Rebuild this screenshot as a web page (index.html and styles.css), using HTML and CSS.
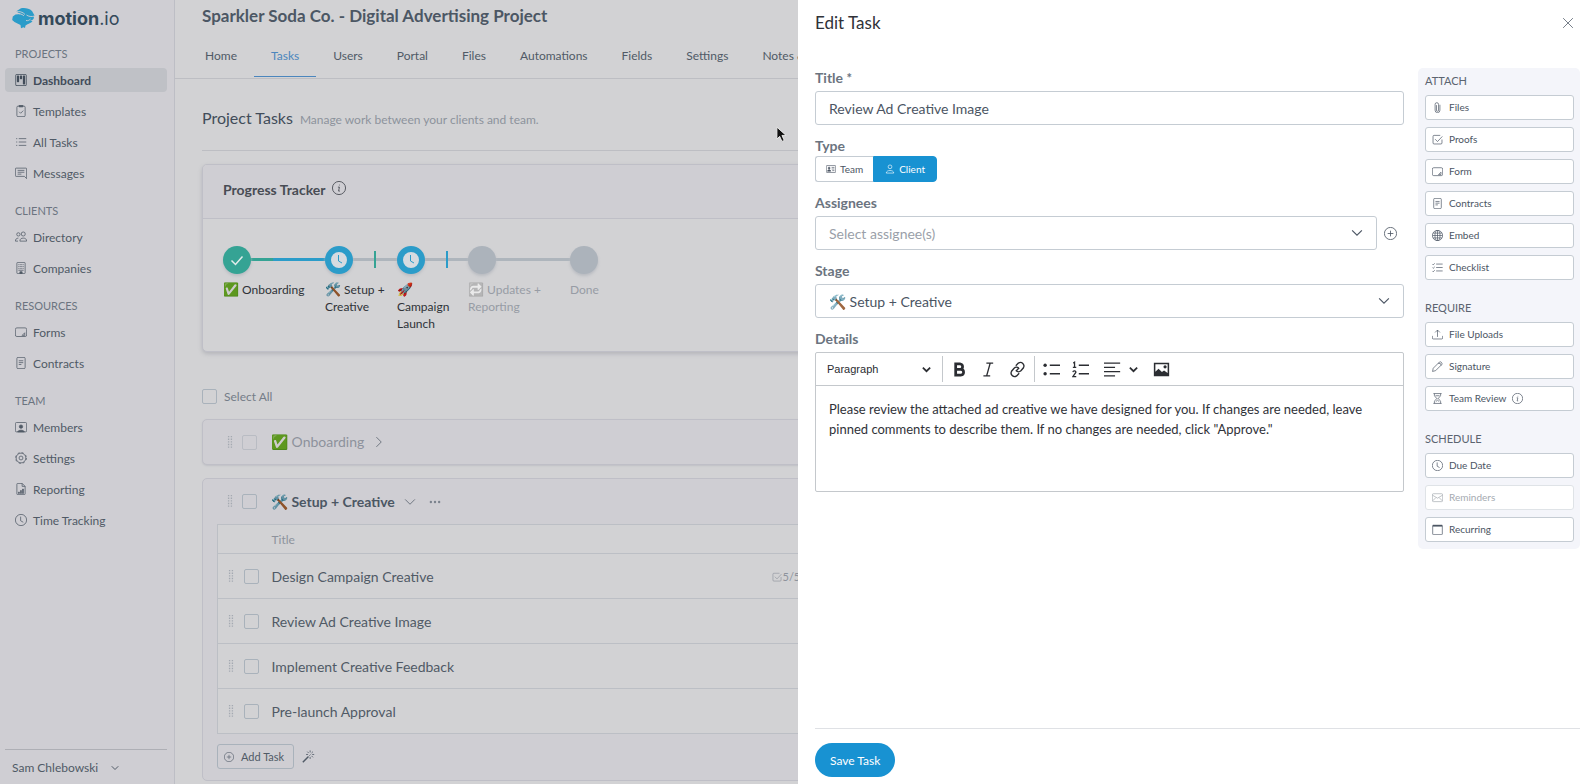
FILE: index.html
```html
<!DOCTYPE html>
<html lang="en">
<head>
    <meta charset="UTF-8">
    <title>Sparkler Soda Co. - Digital Advertising Project</title>
    <link rel="stylesheet" href="styles.css">
</head>
<body>
    <svg class="sprite" aria-hidden="true">
        <symbol id="kanban" viewBox="0 0 16 16"><path fill="currentColor" stroke="none" d="M13.5 1a1 1 0 0 1 1 1v12a1 1 0 0 1-1 1h-11a1 1 0 0 1-1-1V2a1 1 0 0 1 1-1zm-11-1a2 2 0 0 0-2 2v12a2 2 0 0 0 2 2h11a2 2 0 0 0 2-2V2a2 2 0 0 0-2-2zM6.5 3a1 1 0 0 1 1-1h1a1 1 0 0 1 1 1v3a1 1 0 0 1-1 1h-1a1 1 0 0 1-1-1zm-4 0a1 1 0 0 1 1-1h1a1 1 0 0 1 1 1v7a1 1 0 0 1-1 1h-1a1 1 0 0 1-1-1zm8 0a1 1 0 0 1 1-1h1a1 1 0 0 1 1 1v10a1 1 0 0 1-1 1h-1a1 1 0 0 1-1-1z"/></symbol>
        <symbol id="clipboard" viewBox="0 0 16 16"><rect x="2.5" y="1.5" width="11" height="14" rx="1.5"/><path fill="currentColor" d="M5.5.5h5v2h-5z"/><path d="M5.5 9l2 2 3.500-3.500"/></symbol>
        <symbol id="list" viewBox="0 0 16 16"><path d="M5 3.500h10M5 8h10M5 12.500h10M1.500 3.500h1.500M1.500 8h1.500M1.500 12.500h1.500"/></symbol>
        <symbol id="message" viewBox="0 0 16 16"><path d="M1.500 1.500h13a1 1 0 0 1 1 1v13L12.500 12.500h-11a1 1 0 0 1-1-1v-9a1 1 0 0 1 1-1zM3.500 4.500h9M3.500 7h9M3.500 9.500h5"/></symbol>
        <symbol id="people" viewBox="0 0 16 16"><circle cx="4.500" cy="4.500" r="2.200"/><circle cx="11" cy="4" r="2.700"/><path d="M6.500 13.500c0-3 2-4 4.500-4s4.500 1 4.500 4zM4 13.500H.5c0-2.500 1.500-4 4-4"/></symbol>
        <symbol id="building" viewBox="0 0 16 16"><rect x="2.500" y=".5" width="11" height="15" rx="1"/><path d="M4.500 3.500h1.500m1 0h2m1 0h1.500M4.500 6h1.500m1 0h2m1 0h1.500M4.500 8.500h1.500m1 0h2m1 0h1.500M4.500 11h7"/><path fill="currentColor" d="M6.500 13h3v2.500h-3z"/></symbol>
        <symbol id="form" viewBox="0 0 16 16"><rect x=".5" y="2.500" width="15" height="11.500" rx="2"/><path d="M9.500 12.500l3.500-3.500v3.500z"/></symbol>
        <symbol id="contract" viewBox="0 0 16 16"><rect x="2.500" y=".5" width="11" height="15" rx="1.500"/><path d="M5 5h6M5 7.500h6M5 10h3.500"/></symbol>
        <symbol id="member" viewBox="0 0 16 16"><path d="M2 14.500a1.500 1.500 0 0 1-1.500-1.500V3.500A1.500 1.500 0 0 1 2 2h12a1.500 1.500 0 0 1 1.500 1.500V13a1.500 1.500 0 0 1-1.500 1.500z"/><circle fill="currentColor" cx="8" cy="7.500" r="2.200"/><path fill="currentColor" d="M3.500 14.500c1-3 8-3 9 0z"/></symbol>
        <symbol id="gear" viewBox="0 0 16 16"><circle cx="8" cy="8" r="6.500"/><circle cx="8" cy="8" r="7.200" stroke-dasharray="2.800 2.855"/><circle cx="8" cy="8" r="2.600"/></symbol>
        <symbol id="report" viewBox="0 0 16 16"><path d="M9.500.5h-6a1 1 0 0 0-1 1v13a1 1 0 0 0 1 1h9a1 1 0 0 0 1-1v-10zM9.500.5v4h4"/><path fill="currentColor" d="M4.800 12h.9v2h-.9zM7.500 10h.9v4h-.9zM10.200 8h.9v6h-.9z"/></symbol>
        <symbol id="clock" viewBox="0 0 16 16"><circle cx="8" cy="8" r="7.500"/><path d="M7.500 3.500v5.500l3.500 2"/></symbol>
        <symbol id="info" viewBox="0 0 16 16"><circle cx="8" cy="8" r="7.500"/><path d="M6.800 7h1.700l-1 4.500h1.500M8.500 4.200v.8"/></symbol>
        <symbol id="down" viewBox="0 0 16 16"><path d="M1.500 4.500L8 11l6.500-6.500"/></symbol>
        <symbol id="right" viewBox="0 0 16 16"><path d="M4.500 1.500L11 8l-6.500 6.500"/></symbol>
        <symbol id="grip" viewBox="0 0 6 16"><path stroke-width="1.400" stroke-dasharray="1.400 1.400" d="M1.500 1v14M4.500 1v14"/></symbol>
        <symbol id="more" viewBox="0 0 16 16"><g fill="currentColor" stroke="none"><circle cx="2.500" cy="8" r="1.600"/><circle cx="8" cy="8" r="1.600"/><circle cx="13.500" cy="8" r="1.600"/></g></symbol>
        <symbol id="plus" viewBox="0 0 16 16"><circle cx="8" cy="8" r="7.500"/><path d="M8 4.500v7M4.500 8h7"/></symbol>
        <symbol id="wand" viewBox="0 0 16 16"><path stroke-width="1.800" d="M1 15l7-7"/><path d="M10 .5v2.500M10 8.500V11M5 5.500h2.500M12.500 5.500H15M6.500 2l1.800 1.800M13.500 2l-1.800 1.800M13.500 9l-1.800-1.800M9 7l1.500-1.500"/></symbol>
        <symbol id="proof" viewBox="0 0 16 16"><path d="M14.500 8v5a1.500 1.500 0 0 1-1.500 1.500H3A1.500 1.500 0 0 1 1.500 13V3.500A1.500 1.500 0 0 1 3 2h9M4.500 7.500l3.500 3.500 7-7.500"/></symbol>
        <symbol id="close" viewBox="0 0 16 16"><path d="M1.500 1.500l13 13M14.500 1.500l-13 13"/></symbol>
        <symbol id="card" viewBox="0 0 16 16"><rect x=".5" y="2.500" width="15" height="11" rx="1"/><circle fill="currentColor" cx="5" cy="6.500" r="1.500"/><path fill="currentColor" d="M2.500 11.500c0-3 5-3 5 0z"/><path d="M9 5.500h4.500M9 8h4.500M10 10.500h3.500"/></symbol>
        <symbol id="person" viewBox="0 0 16 16"><circle cx="8" cy="4.500" r="3"/><path d="M2 14.500c0-5.500 12-5.500 12 0z"/></symbol>
        <symbol id="clip" viewBox="0 0 16 16"><path d="M4.500 3.500a2.500 2.500 0 0 1 5 0v8.500a1.500 1.500 0 0 1-3 0V4.500M4.500 3.500v8.500a3.500 3.500 0 0 0 7 0V4"/></symbol>
        <symbol id="globe" viewBox="0 0 16 16"><circle cx="8" cy="8" r="7.500"/><ellipse cx="8" cy="8" rx="3.700" ry="7.500"/><path d="M8 .5v15M.5 8h15M1.500 4.500h13M1.500 11.500h13"/></symbol>
        <symbol id="checklist" viewBox="0 0 16 16"><path d="M6 3h9.500M6 8h9.500M6 13h9.500M.5 3l1.200 1.200L4 2M.5 8l1.200 1.200L4 7M.5 13l1.200 1.200L4 12"/></symbol>
        <symbol id="upload" viewBox="0 0 16 16"><path d="M.5 10v3a1.500 1.500 0 0 0 1.500 1.500h12a1.500 1.500 0 0 0 1.500-1.500v-3M8 11.500V1.500M4.500 5L8 1.500 11.500 5"/></symbol>
        <symbol id="pen" viewBox="0 0 16 16"><path d="M.8 15.200l1-4.700 9-9c1.500-1.500 5 1.500 3.500 3.500l-9 9zM9 3.500h3l1.500 3"/></symbol>
        <symbol id="hourglass" viewBox="0 0 16 16"><path d="M2 .8h12M2 15.200h12M3.500 1v2.500c0 2.500 3.500 3 3.500 4.500s-3.500 2-3.500 4.500V15M12.500 1v2.500c0 2.500-3.500 3-3.500 4.500s3.500 2 3.500 4.500V15M5 4h6M5.500 12.500L8 10.500l2.500 2"/></symbol>
        <symbol id="mail" viewBox="0 0 16 16"><rect x=".5" y="2.500" width="15" height="11.500" rx="1.500"/><path d="M.5 4.500L8 9l7.500-4.500M.8 13l5-5M15.200 13l-5-5"/></symbol>
        <symbol id="calendar" viewBox="0 0 16 16"><rect x="1" y="2" width="14" height="13.500" rx="1"/><path stroke-width="2.500" d="M1 2.500h14"/></symbol>
        <symbol id="image" viewBox="0 0 20 20"><path fill="currentColor" stroke="none" fill-rule="evenodd" d="M1 2h18v16H1zM2.800 3.800v8.700L6.500 9l4 4 2.500-1.800 4.200 3V3.800zM14.200 5a1.800 1.800 0 1 1 0 3.800 1.800 1.800 0 0 1 0-3.800z"/></symbol>
    </svg>

    <div class="app">
        <aside class="sidebar">
            <a class="logo" href="#">
                <svg viewBox="0 0 24 21" aria-hidden="true">
                    <path fill="#2b9cc9" d="M4 3.500L9 .3c4-.6 8 0 11 2.700l2.500 4.500-1 1.200.5 1c-.5 2-2.500 2.800-4 3.300h2.500c-1 1.800-3.500 2.500-5 3.300l-2 1.200-.5 2.500-1.500-.7-2.500 1-.5-3.300-6-3L.2 12l.6-3.500L3.500 6.500 9 6z"/>
                    <path fill="none" stroke="#cfced3" stroke-width=".9" d="M4 3.800c3-.8 7 .2 9 2.700M22.500 8c-3 1-6 .5-8-1M14 12.500c2 .5 3-.2 4.500-1.500M7 5.800c2.500.2 4 1 5 2.200"/>
                </svg>
                <span><b>motion</b>.io</span>
            </a>
            <nav class="menu">
                <h2>PROJECTS</h2>
                <a class="active" href="#"><svg class="icon"><use href="#kanban"/></svg>Dashboard</a>
                <a href="#"><svg class="icon"><use href="#clipboard"/></svg>Templates</a>
                <a href="#"><svg class="icon"><use href="#list"/></svg>All Tasks</a>
                <a href="#"><svg class="icon"><use href="#message"/></svg>Messages</a>
                <h2>CLIENTS</h2>
                <a href="#"><svg class="icon"><use href="#people"/></svg>Directory</a>
                <a href="#"><svg class="icon"><use href="#building"/></svg>Companies</a>
                <h2>RESOURCES</h2>
                <a href="#"><svg class="icon"><use href="#form"/></svg>Forms</a>
                <a href="#"><svg class="icon"><use href="#contract"/></svg>Contracts</a>
                <h2>TEAM</h2>
                <a href="#"><svg class="icon"><use href="#member"/></svg>Members</a>
                <a href="#"><svg class="icon"><use href="#gear"/></svg>Settings</a>
                <a href="#"><svg class="icon"><use href="#report"/></svg>Reporting</a>
                <a href="#"><svg class="icon"><use href="#clock"/></svg>Time Tracking</a>
            </nav>
            <button class="account">Sam Chlebowski <svg><use href="#down"/></svg></button>
        </aside>

        <main>
            <h1>Sparkler Soda Co. - Digital Advertising Project</h1>
            <nav class="tabs">
                <a href="#">Home</a>
                <a class="active" href="#">Tasks</a>
                <a href="#">Users</a>
                <a href="#">Portal</a>
                <a href="#">Files</a>
                <a href="#">Automations</a>
                <a href="#">Fields</a>
                <a href="#">Settings</a>
                <a href="#">Notes &amp; Activity</a>
            </nav>
            <div class="content">
                <header class="pageHead">
                    <h2>Project Tasks</h2>
                    <p>Manage work between your clients and team.</p>
                </header>

                <section class="card tracker">
                    <h3>Progress Tracker <svg class="icon"><use href="#info"/></svg></h3>
                    <ol class="steps">
                        <li class="done">
                            <i class="dot"><svg viewBox="0 0 16 16"><path d="M2.500 8.500l4 4 7-8"/></svg></i>
                            <span><span class="emoji">✅</span> Onboarding</span>
                        </li>
                        <li class="current tickGreen">
                            <i class="dot"><svg viewBox="0 0 16 16"><path d="M7.500 3v6l3.500 2"/></svg></i>
                            <span><span class="emoji">🛠️</span> Setup + Creative</span>
                        </li>
                        <li class="current tickBlue">
                            <i class="dot"><svg viewBox="0 0 16 16"><path d="M7.500 3v6l3.500 2"/></svg></i>
                            <span><span class="emoji">🚀</span> Campaign Launch</span>
                        </li>
                        <li>
                            <i class="dot"></i>
                            <span><span class="emoji faded">🔁</span> Updates + Reporting</span>
                        </li>
                        <li>
                            <i class="dot"></i>
                            <span>Done</span>
                        </li>
                    </ol>
                </section>

                <label class="selectAll"><input type="checkbox"> Select All</label>

                <section class="card stage closed">
                    <header>
                        <svg class="grip"><use href="#grip"/></svg>
                        <input type="checkbox" aria-label="Select Onboarding">
                        <h3><span class="emoji">✅</span> Onboarding</h3>
                        <svg class="icon"><use href="#right"/></svg>
                    </header>
                </section>

                <section class="card stage">
                    <header>
                        <svg class="grip"><use href="#grip"/></svg>
                        <input type="checkbox" aria-label="Select Setup + Creative">
                        <h3><span class="emoji">🛠️</span> Setup + Creative</h3>
                        <svg class="icon"><use href="#down"/></svg>
                        <svg class="icon"><use href="#more"/></svg>
                    </header>
                    <table>
                        <thead>
                            <tr><th></th><th></th><th>Title</th><th></th></tr>
                        </thead>
                        <tbody>
                            <tr>
                                <td><svg class="grip"><use href="#grip"/></svg></td>
                                <td><input type="checkbox" aria-label="Select Design Campaign Creative"></td>
                                <td>Design Campaign Creative</td>
                                <td class="count"><svg><use href="#proof"/></svg>5/5</td>
                            </tr>
                            <tr>
                                <td><svg class="grip"><use href="#grip"/></svg></td>
                                <td><input type="checkbox" aria-label="Select Review Ad Creative Image"></td>
                                <td>Review Ad Creative Image</td>
                                <td></td>
                            </tr>
                            <tr>
                                <td><svg class="grip"><use href="#grip"/></svg></td>
                                <td><input type="checkbox" aria-label="Select Implement Creative Feedback"></td>
                                <td>Implement Creative Feedback</td>
                                <td></td>
                            </tr>
                            <tr>
                                <td><svg class="grip"><use href="#grip"/></svg></td>
                                <td><input type="checkbox" aria-label="Select Pre-launch Approval"></td>
                                <td>Pre-launch Approval</td>
                                <td></td>
                            </tr>
                        </tbody>
                    </table>
                    <footer>
                        <button class="addTask"><svg><use href="#plus"/></svg>Add Task</button>
                        <svg class="icon"><use href="#wand"/></svg>
                    </footer>
                </section>
            </div>
        </main>
    </div>

    <svg class="cursor" viewBox="0 0 12 18" aria-hidden="true"><path fill="#111" stroke="#eee" d="M1 1v13l3-3 2.500 5.500 2.500-1-2.500-5.500H11z"/></svg>

    <div class="drawer" role="dialog" aria-labelledby="drawerTitle">
        <header class="drawerHead">
            <h2 id="drawerTitle">Edit Task</h2>
            <button class="plain" aria-label="Close"><svg class="icon"><use href="#close"/></svg></button>
        </header>
        <div class="drawerBody">
            <form id="taskForm">
                <div class="field">
                    <label for="title">Title <small>*</small></label>
                    <input class="box" id="title" type="text" value="Review Ad Creative Image">
                </div>
                <div class="field type">
                    <span class="label">Type</span>
                    <div class="segmented">
                        <button type="button"><svg><use href="#card"/></svg>Team</button>
                        <button type="button" class="on"><svg><use href="#person"/></svg>Client</button>
                    </div>
                </div>
                <div class="field">
                    <label for="assignees">Assignees</label>
                    <div class="row">
                        <div class="select">
                            <select class="box empty" id="assignees"><option>Select assignee(s)</option></select>
                            <svg class="icon"><use href="#down"/></svg>
                        </div>
                        <button type="button" class="plain" aria-label="Add assignee"><svg class="icon"><use href="#plus"/></svg></button>
                    </div>
                </div>
                <div class="field">
                    <label for="stage">Stage</label>
                    <div class="select">
                        <select class="box" id="stage"><option>🛠️ Setup + Creative</option></select>
                        <svg class="icon"><use href="#down"/></svg>
                    </div>
                </div>
                <div class="field">
                    <label for="details">Details</label>
                    <div class="editor">
                        <div class="toolbar">
                            <div class="select paragraph">
                                <select aria-label="Heading"><option>Paragraph</option></select>
                                <svg class="caret"><use href="#down"/></svg>
                            </div>
                            <hr>
                            <button type="button" aria-label="Bold"><svg viewBox="0 0 20 20"><path stroke-width="3.200" d="M5.500 3.500H11a3.200 3.200 0 0 1 0 6.300H5.500zM5.500 9.800H12a3.400 3.400 0 0 1 0 6.700H5.500z"/></svg></button>
                            <button type="button" aria-label="Italic"><svg viewBox="0 0 20 20"><path d="M7.500 2.500h8M4 17.500h8M12 2.500l-4.200 15"/></svg></button>
                            <button type="button" aria-label="Link"><svg viewBox="0 0 20 20"><path d="M8 5.500l3-3c4-2.500 8 1.500 6 5.500l-3 3.500c-1.500 1.500-4 1.500-5.500 0M12 14.500l-3 3c-4 2.500-8-1.500-6-5.500l3-3.500c1.500-1.500 4-1.500 5.500 0M8 12l4-4"/></svg></button>
                            <hr>
                            <button type="button" aria-label="Bulleted list"><svg viewBox="0 0 20 20"><path d="M8 5h12M8 15h12"/><g fill="currentColor" stroke="none"><circle cx="2.500" cy="5" r="2"/><circle cx="2.500" cy="15" r="2"/></g></svg></button>
                            <button type="button" aria-label="Numbered list"><svg viewBox="0 0 20 20"><path d="M8 5h12M8 15h12"/><path stroke-width="1.500" d="M1.500 2.500l1.500-1v6M1 7.500h4M1 13c.5-2 4-1.500 3.500.5L1 18.500h4"/></svg></button>
                            <button type="button" class="align" aria-label="Text alignment"><svg viewBox="0 0 20 20"><path d="M0 2.500h19M0 7.500h13M0 12.500h19M0 17.500h13"/></svg><svg class="caret"><use href="#down"/></svg></button>
                            <button type="button" aria-label="Insert image"><svg><use href="#image"/></svg></button>
                        </div>
                        <textarea id="details">Please review the attached ad creative we have designed for you. If changes are needed, leave pinned comments to describe them. If no changes are needed, click "Approve."</textarea>
                    </div>
                </div>
            </form>
            <aside class="actions">
                <section>
                    <h3>ATTACH</h3>
                    <button><svg><use href="#clip"/></svg>Files</button>
                    <button><svg><use href="#proof"/></svg>Proofs</button>
                    <button><svg><use href="#form"/></svg>Form</button>
                    <button><svg><use href="#contract"/></svg>Contracts</button>
                    <button><svg><use href="#globe"/></svg>Embed</button>
                    <button><svg><use href="#checklist"/></svg>Checklist</button>
                </section>
                <section>
                    <h3>REQUIRE</h3>
                    <button><svg><use href="#upload"/></svg>File Uploads</button>
                    <button><svg><use href="#pen"/></svg>Signature</button>
                    <button><svg><use href="#hourglass"/></svg>Team Review<svg class="hint"><use href="#info"/></svg></button>
                </section>
                <section>
                    <h3>SCHEDULE</h3>
                    <button><svg><use href="#clock"/></svg>Due Date</button>
                    <button disabled><svg><use href="#mail"/></svg>Reminders</button>
                    <button><svg><use href="#calendar"/></svg>Recurring</button>
                </section>
            </aside>
        </div>
        <footer class="drawerFoot">
            <button class="save" type="submit" form="taskForm">Save Task</button>
        </footer>
    </div>
</body>
</html>
```
FILE: styles.css
```css
*{
    box-sizing: border-box;
}
body{
    margin: 0;
    height: 100vh;
    overflow: hidden;
    font-family: Lato, "Noto Sans", sans-serif;
    font-size: 12px;
    line-height: 17px;
    color: #505a66;
    background: #d2d2d4;
}
h1,h2,h3,p,ol{
    margin: 0;
    padding: 0;
}
a{
    color: inherit;
    text-decoration: none;
}
button,input,select,textarea{
    font: inherit;
    color: inherit;
    margin: 0;
}
button{
    background: none;
    border: none;
    padding: 0;
    cursor: pointer;
}
svg{
    display: block;
    flex: none;
    fill: none;
    stroke: currentColor;
}
.sprite{
    display: none;
}
.icon{
    width: 12px;
    height: 12px;
}
.emoji{
    filter: saturate(1.3) brightness(.82);
}
.emoji.faded{
    filter: grayscale(1);
    opacity: .6;
}
input[type="checkbox"]{
    appearance: none;
    display: block;
    flex: none;
    width: 15px;
    height: 15px;
    border: 1px solid #a9b2bb;
    border-radius: 2px;
}
.app{
    display: flex;
    height: 100%;
}

/* sidebar */
.sidebar{
    display: flex;
    flex-direction: column;
    flex: none;
    width: 175px;
    padding: 7px 7px 0 5px;
    background: #cfced3;
    border-right: 1px solid #bdbec5;
}
.logo{
    display: flex;
    align-items: center;
    gap: 2px;
    height: 22px;
    margin: 0 0 16px 7px;
    font-family: Inter, sans-serif;
    font-size: 18px;
    color: #33495a;
}
.logo svg{
    width: 24px;
    height: 21px;
    stroke: none;
}
.logo b{
    font-weight: 700;
}
.menu{
    display: flex;
    flex-direction: column;
    gap: 7px;
    flex: 1;
}
.menu h2{
    height: 16px;
    padding-left: 10px;
    font-size: 11px;
    font-weight: 400;
    line-height: 18px;
    color: #6b7480;
}
.menu a + h2{
    margin-top: 10px;
}
.menu a{
    display: flex;
    align-items: center;
    gap: 6px;
    height: 24px;
    padding: 0 10px;
    border-radius: 4px;
}
.menu a.active{
    background: #bfc1c6;
    font-weight: 700;
    color: #414c59;
}
.account{
    display: flex;
    align-items: center;
    gap: 13px;
    height: 36px;
    margin-bottom: -1px;
    padding-left: 7px;
    border-top: 1px solid #aeafb5;
}
.account svg{
    width: 8px;
    height: 8px;
    stroke-width: 2;
}

/* project page */
main{
    flex: 1;
    min-width: 0;
    white-space: nowrap;
}
h1{
    padding: 5px 0 0 27px;
    font-size: 17px;
    font-weight: 700;
    line-height: 22px;
    color: #4c5764;
}
.tabs{
    display: flex;
    height: 52px;
    padding-left: 13px;
    border-bottom: 1px solid #bdbec3;
}
.tabs a{
    height: 50px;
    padding: 20px 17px 0;
    border-bottom: 1px solid transparent;
}
.tabs a.active{
    color: #4b86bd;
    border-color: #4b86bd;
}
.content{
    padding: 0 26px 0 27px;
}
.pageHead{
    display: flex;
    align-items: baseline;
    gap: 7px;
    height: 72px;
    padding-top: 28px;
    border-bottom: 1px solid #bdbec3;
}
.pageHead h2{
    font-size: 16px;
    font-weight: 400;
    line-height: 22px;
    color: #414c59;
}
.pageHead p{
    color: #8d929c;
}
.card{
    border: 1px solid #bfbfc7;
    border-radius: 5px;
    background: #cfced3;
}
.tracker{
    height: 188px;
    margin-top: 13px;
    background: #d2d2d4;
    box-shadow: 0 2px 4px #b4b5ba;
}
.tracker h3{
    display: flex;
    gap: 6px;
    height: 54px;
    padding: 16px 20px 0;
    border-bottom: 1px solid #bfbfc7;
    border-radius: 4px 4px 0 0;
    background: #cfced3;
    font-size: 14px;
    color: #484c54;
}
.tracker h3 .icon{
    width: 14px;
    height: 14px;
}
.steps{
    display: grid;
    grid-template-columns: 102px 72px 71px 102px 72px;
    padding: 27px 20px 0;
    list-style: none;
    white-space: normal;
    color: #979ca5;
}
.steps li{
    position: relative;
}
.steps li > span{
    display: block;
    padding-right: 8px;
    margin-top: 7px;
}
.steps .emoji{
    font-size: 13px;
}
.steps .done,.steps .current{
    color: #2f3238;
}
.dot{
    display: flex;
    align-items: center;
    justify-content: center;
    position: relative;
    width: 28px;
    height: 28px;
    border-radius: 50%;
    background: #acb3bb;
    box-shadow: 0 2px 3px #b9bcc2;
}
.steps li:not(:last-child)::before{
    content: "";
    position: absolute;
    top: 12px;
    left: 14px;
    width: 100%;
    height: 3px;
    background: #aeb5bc;
}
.steps li.done:not(:last-child)::before{
    background: linear-gradient(to right, #35a394 35%, #2b9cc9 36%);
}
.tickGreen::after,.tickBlue::after{
    content: "";
    position: absolute;
    top: 5px;
    left: 49px;
    width: 2px;
    height: 17px;
    background: #35a394;
}
.tickBlue::after{
    background: #2b9cc9;
}
.done .dot{
    background: #35a394;
    color: #e3eceb;
}
.done .dot svg{
    width: 16px;
    height: 16px;
    stroke-width: 1.5px;
}
.current .dot{
    background: #d6dbe0;
    border: 6px solid #2b9cc9;
    color: #2b9cc9;
}
.current .dot svg{
    width: 16px;
    height: 16px;
}
.selectAll{
    display: flex;
    align-items: center;
    gap: 7px;
    height: 17px;
    margin: 36px 0 14px;
    color: #757d88;
}
.stage{
    margin-bottom: 13px;
    padding: 0 14px;
}
.stage header{
    display: flex;
    align-items: center;
    height: 45px;
    padding-left: 10px;
}
.stage h3{
    margin: 0 9px 0 14px;
    font-size: 14px;
    line-height: 20px;
    color: #4c5764;
}
.stage header .icon + .icon{
    margin-left: 13px;
    color: #7a828d;
}
.grip{
    width: 6px;
    height: 15px;
    color: #a4a9b1;
}
.stage header .grip{
    margin-right: 9px;
}
.closed{
    height: 46px;
    box-shadow: 0 1px 2px #bfc0c5;
}
.closed header{
    height: 44px;
}
.closed h3{
    font-weight: 400;
    color: #8d929c;
}
.closed input[type="checkbox"]{
    border-color: #b9bcc3;
}
table{
    width: 100%;
    border: 1px solid #bcbfc5;
    border-collapse: collapse;
    table-layout: fixed;
    background: #d2d2d4;
}
tr{
    height: 45px;
    border-bottom: 1px solid #bcbfc5;
}
thead tr{
    height: 29px;
}
th,td{
    padding: 0;
    text-align: left;
    font-size: 14px;
}
th{
    font-size: 12px;
    font-weight: 400;
    color: #8d929c;
}
th:nth-child(1){
    width: 26px;
}
th:nth-child(2){
    width: 28px;
}
th:nth-child(3){
    width: 500px;
}
td:first-child{
    padding-left: 10px;
}
td.count{
    font-size: 11px;
    color: #8d929c;
}
td.count svg{
    display: inline-block;
    vertical-align: -1px;
    width: 10px;
    height: 10px;
    margin-right: 1px;
}
.stage footer{
    display: flex;
    align-items: center;
    gap: 8px;
    height: 46px;
    padding-bottom: 1px;
}
.stage footer .icon{
    width: 13px;
    height: 13px;
}
.addTask{
    display: flex;
    align-items: center;
    gap: 7px;
    height: 25px;
    padding: 0 9px 0 6px;
    border: 1px solid #a9b2bb;
    border-radius: 3px;
    font-size: 11px;
}
.addTask svg{
    width: 10px;
    height: 10px;
}
.cursor{
    position: fixed;
    top: 126px;
    left: 776px;
    width: 11px;
    height: 17px;
}

/* edit drawer */
.drawer{
    position: fixed;
    top: 0;
    right: 0;
    bottom: 0;
    width: calc(50% - 8px);
    display: flex;
    flex-direction: column;
    padding-left: 17px;
    background: #fff;
    color: #4b5563;
}
.drawerHead{
    display: flex;
    align-items: center;
    justify-content: space-between;
    height: 45px;
    padding-right: 6px;
}
.drawerHead h2{
    font-size: 17px;
    font-weight: 400;
    color: #303238;
}
.drawerBody{
    display: flex;
    align-items: flex-start;
    gap: 14px;
    flex: 1;
    padding-top: 23px;
}
form{
    flex: 1;
    min-width: 0;
    display: flex;
    flex-direction: column;
    gap: 11px;
}
.field label,.label{
    display: block;
    height: 19px;
    margin-bottom: 4px;
    font-size: 14px;
    font-weight: 700;
    line-height: 19px;
    color: #6b7480;
}
.field small{
    font-size: 13px;
}
.box{
    display: block;
    width: 100%;
    height: 34px;
    padding: 0 13px;
    border: 1px solid #c5ccd3;
    border-radius: 3px;
    background: #fff;
    font-size: 14px;
}
select{
    appearance: none;
}
.select{
    position: relative;
    flex: 1;
}
.select > svg{
    position: absolute;
    top: 11px;
    right: 14px;
    stroke-width: 1.5px;
    pointer-events: none;
}
.empty{
    color: #9a9fa9;
}
.row{
    display: flex;
    align-items: center;
    gap: 7px;
}
.row .plain{
    margin-right: 7px;
}
.row .plain svg{
    width: 13px;
    height: 13px;
}
.type .label{
    margin-bottom: 1px;
}
.segmented{
    display: flex;
}
.segmented button{
    display: flex;
    align-items: center;
    gap: 4px;
    height: 26px;
    padding: 0 10px;
    border: 1px solid #c5ccd3;
    border-right: none;
    border-radius: 3px 0 0 3px;
    font-size: 10px;
}
.segmented svg{
    width: 10px;
    height: 10px;
}
.segmented .on{
    padding: 0 11px;
    border: 1px solid #1892d2;
    border-radius: 0 4px 4px 0;
    background: #1892d2;
    color: #fff;
}
.editor{
    border: 1px solid #c4c8cc;
    border-radius: 2px;
}
.toolbar{
    display: flex;
    align-items: center;
    height: 33px;
    border-bottom: 1px solid #c4c8cc;
    color: #2b2d32;
}
.toolbar svg{
    width: 17px;
    height: 17px;
    stroke-width: 1.6px;
}
.toolbar button{
    display: flex;
    align-items: center;
    justify-content: center;
    width: 29px;
    height: 26px;
}
.toolbar hr{
    height: 26px;
    margin: 0 2px;
    border: none;
    border-left: 1px solid #c4c8cc;
}
.toolbar .caret{
    width: 9px;
    height: 9px;
    stroke-width: 3px;
}
.paragraph{
    flex: none;
    width: 124px;
    font-family: "Liberation Sans", Arial, sans-serif;
    font-size: 11px;
}
.paragraph select{
    width: 100%;
    height: 26px;
    padding: 0 11px;
    border: none;
    background: none;
}
.paragraph > svg{
    top: 9px;
    right: 9px;
}
.toolbar .align{
    width: 52px;
    gap: 8px;
}
textarea{
    display: block;
    width: 100%;
    height: 105px;
    padding: 13px 13px 0;
    border: none;
    background: none;
    resize: none;
    font-size: 13px;
    line-height: 20px;
    color: #303238;
}
.actions{
    display: flex;
    flex-direction: column;
    gap: 21px;
    flex: none;
    width: 162px;
    padding: 6px 6px 7px 7px;
    border-radius: 5px;
    background: #f4f5fa;
}
.actions section{
    display: flex;
    flex-direction: column;
    gap: 7px;
}
.actions h3{
    font-size: 11px;
    font-weight: 400;
    line-height: 14px;
    color: #5b6470;
}
.actions button{
    display: flex;
    align-items: center;
    height: 25px;
    padding: 0 6px;
    border: 1px solid #c5ccd3;
    border-radius: 3px;
    background: #fff;
    font-size: 10px;
}
.actions svg{
    width: 11px;
    height: 11px;
    margin-right: 6px;
}
.actions .hint{
    margin: 0 0 0 6px;
}
.actions button:disabled{
    border-color: #dfe3e7;
    color: #a5aab1;
}
.drawerFoot{
    display: flex;
    align-items: center;
    height: 56px;
    padding-top: 7px;
    border-top: 1px solid #dfe1e5;
}
.save{
    height: 34px;
    padding: 0 15px;
    border-radius: 17px;
    background: #1892d2;
    color: #fff;
}
```
